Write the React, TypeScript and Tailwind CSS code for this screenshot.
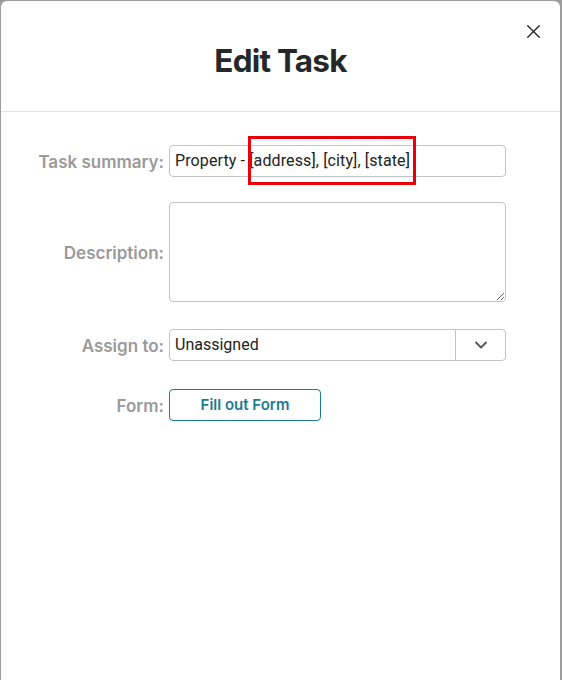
import { ChevronDown, X } from "lucide-react";

const font = { fontFamily: "Inter, 'Noto Sans', sans-serif" };
const fieldFont = { fontFamily: "Roboto, 'Liberation Sans', sans-serif" };

function Row({ label, children, className = "" }: { label: string; children: React.ReactNode; className?: string }) {
  return (
    <div className={"flex items-center gap-[5px] " + className}>
      <label className="w-[163px] shrink-0 pt-[3px] text-right text-[17px] font-semibold text-[#9a9a9a]">{label}</label>
      {children}
    </div>
  );
}

export default function App() {
  return (
    <div className="h-[680px] w-[562px] overflow-hidden bg-[#9c9c9c] pl-px pr-[2px] pt-px" style={font}>
      <div className="relative h-full rounded-t-md bg-white">
        <button className="absolute right-[15px] top-[19px] text-[#222]">
          <X size={23} strokeWidth={1.4} />
        </button>
        <div className="flex h-[111px] items-center justify-center border-b border-[#e3e3e3] pt-[10px]">
          <h1 className="text-[31.5px] font-bold tracking-tight text-[#25282b]">Edit Task</h1>
        </div>

        <div className="relative flex flex-col pt-[33px]">
          <Row label="Task summary:">
            <div className="flex h-[32px] w-[337px] items-center rounded-[4px] border border-[#c4c4c4] px-[5px] text-[16px] tracking-[0.12px] text-[#222]" style={fieldFont}>
              Property - [address], [city], [state]
            </div>
          </Row>

          <Row label="Description:" className="mt-[25px]">
            <textarea className="h-[100px] w-[337px] rounded-[4px] border border-[#c4c4c4]" />
          </Row>

          <Row label="Assign to:" className="mt-[27px]">
            <div className="flex h-[32px] w-[337px] items-center rounded-[4px] border border-[#c4c4c4] text-[16px] text-[#222]" style={fieldFont}>
              <span className="flex-1 px-[5px]">Unassigned</span>
              <span className="flex h-full w-[50px] items-center justify-center border-l border-[#c4c4c4] text-[#555]">
                <ChevronDown size={20} strokeWidth={2.25} />
              </span>
            </div>
          </Row>

          <Row label="Form:" className="mt-[28px]">
            <button className="h-[32px] w-[152px] rounded-[4px] border border-[#1d7a96] text-[15px] font-semibold text-[#1d7a96]">
              Fill out Form
            </button>
          </Row>

          <div className="absolute left-[247px] top-[24px] h-[49px] w-[168px] border-[3px] border-[#e8000b]" />
        </div>
      </div>
    </div>
  );
}
